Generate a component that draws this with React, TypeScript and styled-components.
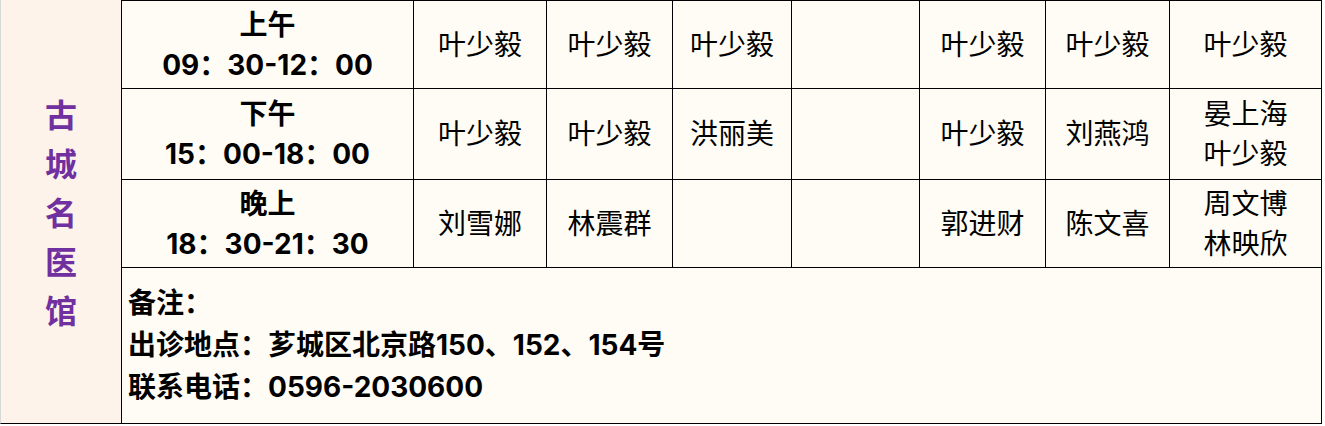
import React from 'react';
import styled, { createGlobalStyle } from 'styled-components';

const GlobalStyle = createGlobalStyle`
  html, body {
    margin: 0;
    padding: 0;
    background: #ffffff;
  }
  body {
    font-family: "Inter", "Noto Sans CJK SC", sans-serif;
  }
`;

const Sheet = styled.div`
  display: flex;
  width: 1322px;
  height: 424px;
`;

const SidePanel = styled.div`
  width: 120px;
  background-color: #fdf3ea;
  border-left: 1px solid #d6dad6;
  border-bottom: 1px solid #000;
  display: flex;
  align-items: center;
  justify-content: center;
`;

const SideTitle = styled.div`
  color: #7030a0;
  font-family: "Noto Sans CJK SC", sans-serif;
  font-size: 32px;
  font-weight: bold;
  line-height: 49px;
  width: 1em;
  text-align: center;
  word-break: break-all;
`;

const Grid = styled.div`
  flex: 1;
  display: grid;
  grid-template-columns: 291px 132px 125px 118px 127px 125px 123px 151px;
  grid-template-rows: 87px 90px 87px 155px;
  gap: 1px;
  background-color: #000;
  border: 1px solid #000;
`;

const Cell = styled.div<{ $bold?: boolean }>`
  background-color: #fffcf5;
  display: flex;
  flex-direction: column;
  align-items: center;
  justify-content: center;
  color: #000;
  font-size: 28px;
  line-height: 40px;
  font-weight: ${(p) => (p.$bold ? 'bold' : 'normal')};
`;

const Notes = styled.div`
  grid-column: 1 / -1;
  background-color: #fffcf5;
  padding: 14px 6px 0;
  font-size: 28px;
  font-weight: bold;
  line-height: 42px;
  color: #000;
`;

type Row = { label: string; time: string; cells: string[][] };

const rows: Row[] = [
  {
    label: '上午',
    time: '09：30-12：00',
    cells: [['叶少毅'], ['叶少毅'], ['叶少毅'], [], ['叶少毅'], ['叶少毅'], ['叶少毅']],
  },
  {
    label: '下午',
    time: '15：00-18：00',
    cells: [['叶少毅'], ['叶少毅'], ['洪丽美'], [], ['叶少毅'], ['刘燕鸿'], ['晏上海', '叶少毅']],
  },
  {
    label: '晚上',
    time: '18：30-21：30',
    cells: [['刘雪娜'], ['林震群'], [], [], ['郭进财'], ['陈文喜'], ['周文博', '林映欣']],
  },
];

const App: React.FC = () => {
  return (
    <>
      <GlobalStyle />
      <Sheet>
        <SidePanel>
          <SideTitle>古城名医馆</SideTitle>
        </SidePanel>
        <Grid>
          {rows.map((row) => (
            <React.Fragment key={row.label}>
              <Cell $bold>
                <div>{row.label}</div>
                <div>{row.time}</div>
              </Cell>
              {row.cells.map((names, i) => (
                <Cell key={i}>
                  {names.map((n, j) => (
                    <div key={j}>{n}</div>
                  ))}
                </Cell>
              ))}
            </React.Fragment>
          ))}
          <Notes>
            <div>备注：</div>
            <div>出诊地点：芗城区北京路150、152、154号</div>
            <div>联系电话：0596-2030600</div>
          </Notes>
        </Grid>
      </Sheet>
    </>
  );
};

export default App;
